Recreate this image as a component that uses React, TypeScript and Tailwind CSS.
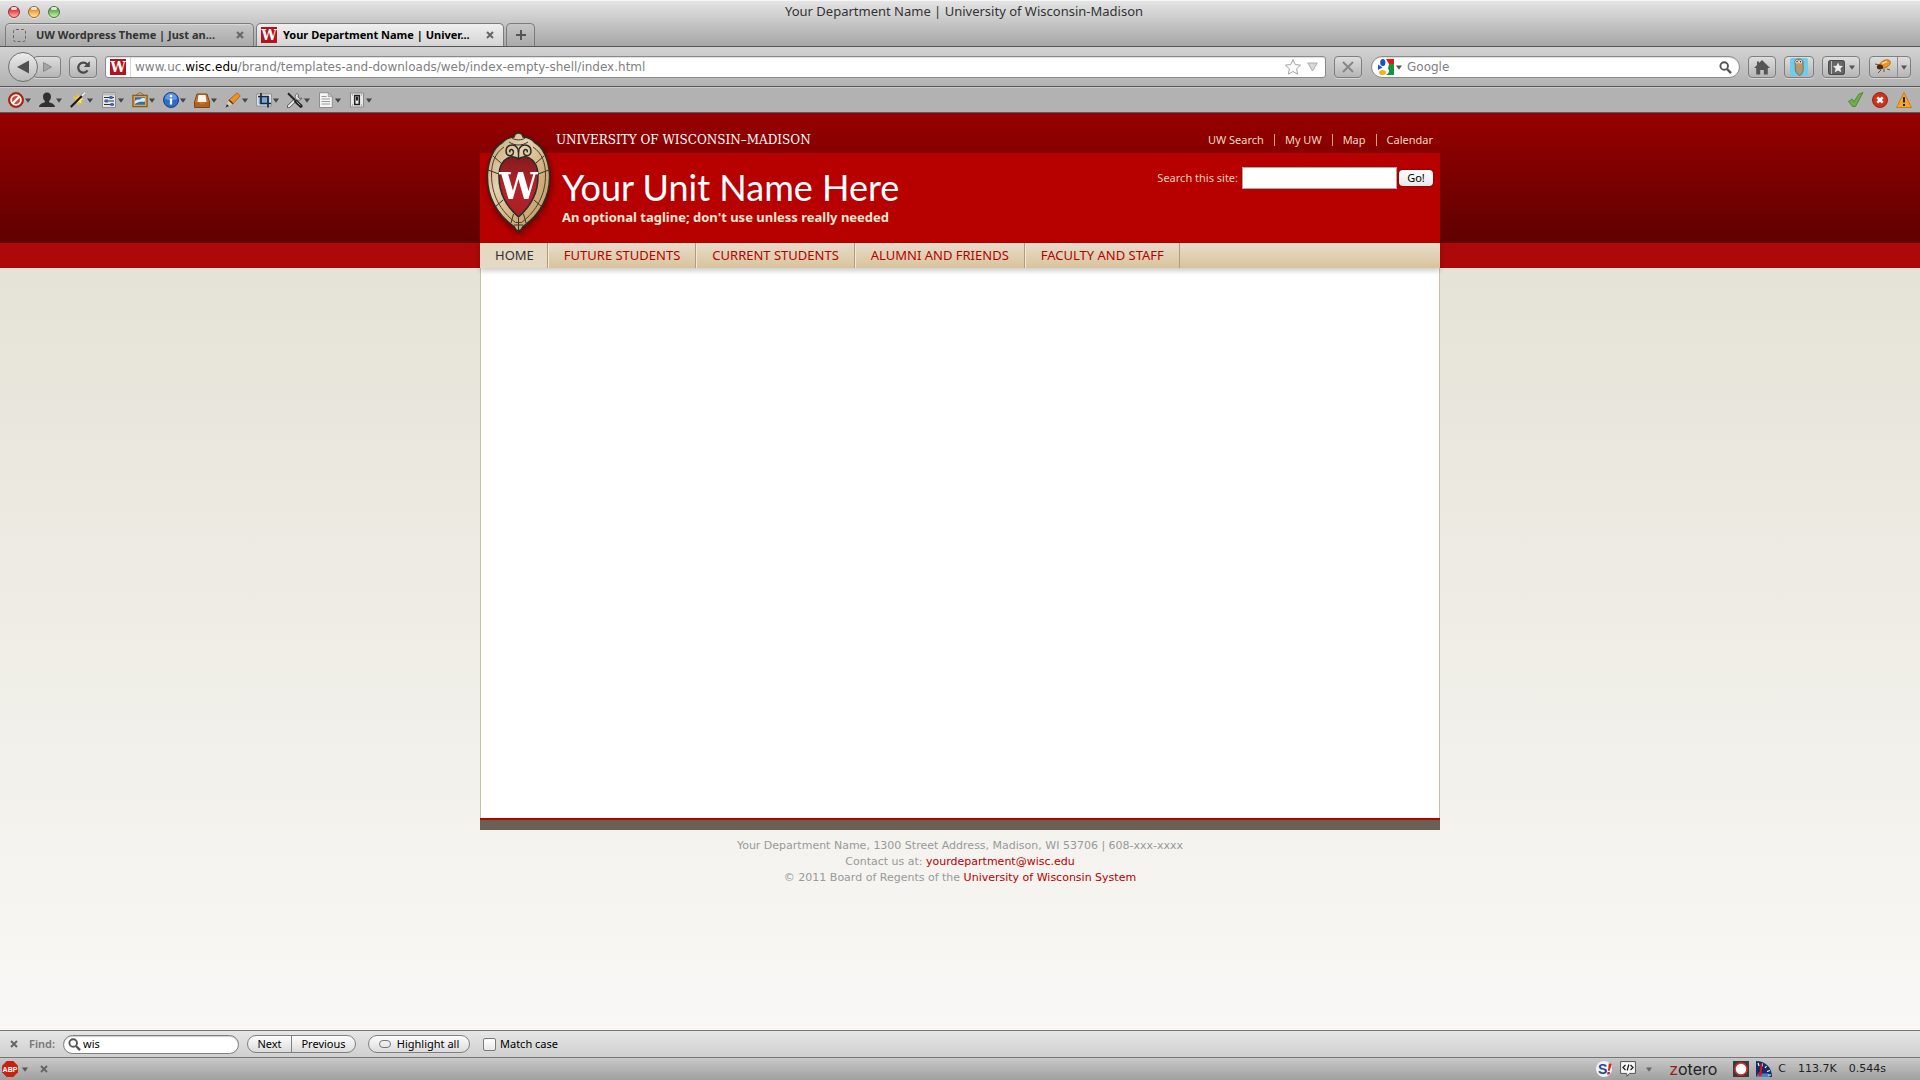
import React from "react";

const SANS = "font-['Lucida_Grande','Noto_Sans',sans-serif]";
const WIDE = "font-['Lucida_Grande','DejaVu_Sans',sans-serif]";

function Caret({ className = "text-[#444]" }: { className?: string }) {
  return (
    <svg width="6" height="5" viewBox="0 0 6 5" className={className} aria-hidden="true">
      <path d="M0 .5h6L3 4.8z" fill="currentColor" />
    </svg>
  );
}

function Cross({ className = "text-[#666]" }: { className?: string }) {
  return (
    <svg width="8" height="8" viewBox="0 0 8 8" className={className} aria-hidden="true">
      <path d="M1 1l6 6M7 1L1 7" stroke="currentColor" strokeWidth="2" />
    </svg>
  );
}

function Magnifier() {
  return (
    <svg width="13" height="13" viewBox="0 0 13 13" className="shrink-0" aria-hidden="true">
      <circle cx="5.2" cy="5" r="3.8" fill="none" stroke="#555" strokeWidth="1.9" />
      <path d="M8 8l4 4.2" stroke="#555" strokeWidth="2.4" />
    </svg>
  );
}

function SiteIcon() {
  return (
    <span className="flex size-4 shrink-0 items-center justify-center overflow-hidden bg-[#b5121b] font-['DejaVu_Serif_Condensed','DejaVu_Serif',serif] text-[15px] leading-none font-bold text-white">
      W
    </span>
  );
}

function TrafficLights() {
  const lights = [
    { name: "Close window", cls: "from-[#b5222a] via-[#ee5a5c] to-[#ffb0a8] border-[#8f3033]" },
    { name: "Minimize window", cls: "from-[#c8771c] via-[#f5ae4b] to-[#ffe79c] border-[#94662c]" },
    { name: "Zoom window", cls: "from-[#3f8a34] via-[#7cc266] to-[#cdf3a8] border-[#43733a]" },
  ];
  return (
    <div className="flex gap-2">
      {lights.map((l) => (
        <button
          key={l.name}
          aria-label={l.name}
          className={"relative size-3 rounded-full border bg-linear-to-b shadow-[0_1px_0_#fff8] " + l.cls}
        >
          <span className="absolute top-0 left-[2px] h-[3px] w-[6px] rounded-full bg-white/80" />
        </button>
      ))}
    </div>
  );
}

const toolIcons: { name: string; art: React.ReactNode }[] = [
  {
    name: "Disable",
    art: (
      <>
        <circle cx="8" cy="8" r="7.8" fill="#c4260f" />
        <circle cx="8" cy="8" r="7.2" fill="none" stroke="#8d1607" strokeWidth=".8" />
        <circle cx="8" cy="8" r="4.9" fill="#c6523f" stroke="#fff" strokeWidth="1.7" />
        <path d="M4.5 11.5l7-7" stroke="#fff" strokeWidth="1.9" />
      </>
    ),
  },
  {
    name: "Cookies",
    art: (
      <path
        d="M8 .5c2.6 0 4 1.8 4 4.2 0 1.700-.9 3.300-1.900 4.200v1.300c1.700.7 5.500 1.300 5.900 4.800H0c.4-3.500 4.200-4.100 5.900-4.800V8.900C4.900 8 4 6.400 4 4.700 4 2.300 5.400.5 8 .5z"
        fill="#303030"
      />
    ),
  },
  {
    name: "CSS",
    art: (
      <>
        <path d="M7 1l1.300 3L11 2.500 10.500 6l4 1-3.300 1.800 1.800 3-3.500-.8L8 14l-1.200-3.600L3 10.500 5.500 8 2.500 4.500l4 .8z" fill="#f3c63a" />
        <path d="M9 4l1 2.500 3 .5-2.500 1.200.5 2.800-2-1.600L6.500 10z" fill="#fff2a0" />
        <path d="M.8 15L14.600 1.200" stroke="#1d1d1d" strokeWidth="2.300" />
        <path d="M11.800 4L15 .9" stroke="#f3f3f3" strokeWidth="2" />
      </>
    ),
  },
  {
    name: "Forms",
    art: (
      <>
        <path d="M1.500 1h13v14.500h-13z" fill="#e7e7e7" stroke="#8b8b8b" />
        <path d="M1.500 1h13v2.500h-13z" fill="#bdbdbd" />
        <path d="M3 5.500h10M3 9h10M3 12.500h10" stroke="#333" />
        <path d="M8.500 4h3v3h-3zM4 7.500h3v3H4zM9.500 11h3v3h-3z" fill="#3b6bb8" />
      </>
    ),
  },
  {
    name: "Images",
    art: (
      <>
        <path d="M4 3l4-2.500L12 3" fill="none" stroke="#876024" strokeWidth=".8" />
        <path d="M.9 3.400h14.200v11.200H.9z" fill="#dca24c" stroke="#8f5b14" strokeWidth="1.300" />
        <path d="M3 5.300h10v7.400H3z" fill="#2d6fb7" />
        <path d="M3 9c3-3 4 0 6-2.500 1-.9 3-.6 4-.2v3.200C10 10 7 9 3 12z" fill="#d5e9f7" />
      </>
    ),
  },
  {
    name: "Information",
    art: (
      <>
        <circle cx="8" cy="8" r="7.500" fill="#2c6bcb" stroke="#1a4288" />
        <path d="M2 7a6 6 0 0112 0c-3 1.500-9 1.500-12 0z" fill="#7ba9ea" opacity=".7" />
        <circle cx="8" cy="4" r="1.300" fill="#fff" />
        <path d="M8 6.500v6" stroke="#fff" strokeWidth="2.300" />
      </>
    ),
  },
  {
    name: "Miscellaneous",
    art: (
      <>
        <path d="M3 2h10l2.500 8v5.500H.5V10z" fill="#c57532" stroke="#84450f" />
        <path d="M4.500 3h7l1 7h-9z" fill="#f8f4ee" />
        <path d="M1 10.300h4l1 1.900h4l1-1.900h4v4.700H1z" fill="#b4611f" />
      </>
    ),
  },
  {
    name: "Outline",
    art: (
      <>
        <path d="M12 .8l3.300 3-7.800 8.500-4-3.700z" fill="#f08f22" stroke="#ad5d0a" strokeWidth=".8" />
        <path d="M3.500 8.600l4 3.700L.8 15.300z" fill="#e3cfa8" />
        <path d="M2 12.300l2 1.700-3.500 1.600z" fill="#222" />
        <path d="M4.500 7.500l4 3.700-1 1.100-4-3.700z" fill="#444" />
      </>
    ),
  },
  {
    name: "Resize",
    art: (
      <>
        <path d="M.7 2h14.600v12H.7z" fill="#f5f5f5" stroke="#8a8a8a" />
        <path d="M2.500 4h11v8.500h-11z" fill="#78a9dc" />
        <path d="M5 1v10.500h10M2 4.500h10V15.500" fill="none" stroke="#1f2733" strokeWidth="1.700" />
      </>
    ),
  },
  {
    name: "Tools",
    art: (
      <>
        <path d="M1.500 14.500L10.500 6" stroke="#555" strokeWidth="3.500" strokeLinecap="round" />
        <path d="M1.800 14.200L10.500 6" stroke="#eee" strokeWidth="2" strokeLinecap="round" />
        <path d="M10 1.500a3.600 3.600 0 105 4.700l-2.500.3-1.500-1.500.5-2.300z" fill="#e4e4e4" stroke="#555" strokeWidth=".8" />
        <path d="M1 1.200l7 7" stroke="#222" strokeWidth="2" />
        <path d="M9 9.500l4.800 4.500" stroke="#222" strokeWidth="3.600" strokeLinecap="round" />
        <path d="M9.500 9.500l4 4" stroke="#aaa" strokeWidth="1" />
      </>
    ),
  },
  {
    name: "View Source",
    art: (
      <>
        <path d="M1.500.7h8.800l4 4v10.800H1.500z" fill="#f6f6f6" stroke="#8e8e8e" />
        <path d="M10.300.7v4h4z" fill="#ccc" stroke="#8e8e8e" strokeWidth=".7" />
        <path d="M3.500 4.500h5M3.500 7h8.500M3.500 9.500h8.500M3.500 12h8.500" stroke="#999" />
      </>
    ),
  },
  {
    name: "Options",
    art: (
      <>
        <path d="M1.500 1h13v14h-13z" fill="#e9e9e9" stroke="#8a8a8a" />
        <path d="M5.700 3.500h4.600v9H5.700z" fill="#eee" stroke="#222" strokeWidth="1.500" />
        <path d="M7 4.500h2v4H7z" fill="#222" />
        <path d="M3.500 2.500v1M12.500 2.500v1M3.500 12.500v1M12.500 12.500v1" stroke="#777" />
      </>
    ),
  },
];

const chromeButton =
  "flex h-[22px] items-center justify-center rounded-[4px] border border-[#7f7f7f] bg-linear-to-b from-[#dedede] to-[#b5b5b5] shadow-[0_1px_0_#ffffff66]";

function TabStrip() {
  return (
    <div className="flex h-[23px] items-stretch gap-[2px] pl-[5px]">
      <div className="flex w-[249px] items-center rounded-t-[5px] border border-b-0 border-[#7c7c7c] bg-linear-to-b from-[#c6c6c6] to-[#a9a9a9] px-[7px] shadow-[inset_0_1px_0_#ffffff55]">
        <span className="size-[13px] shrink-0 rounded-[3px] border border-dashed border-[#666]" />
        <span className="ml-[10px] min-w-0 flex-1 pt-px text-[11px] font-bold whitespace-nowrap text-[#333]">
          UW Wordpress Theme | Just an...
        </span>
        <button aria-label="Close tab" className="px-[2px]">
          <Cross />
        </button>
      </div>
      <div className="flex w-[248px] items-center rounded-t-[5px] border border-b-0 border-[#7c7c7c] bg-linear-to-b from-[#efefef] to-[#d4d4d4] px-[4px]">
        <SiteIcon />
        <span className="ml-[6px] min-w-0 flex-1 pt-px text-[11px] font-bold whitespace-nowrap text-black">
          Your Department Name | Univer...
        </span>
        <button aria-label="Close tab" className="px-[5px]">
          <Cross />
        </button>
      </div>
      <button
        aria-label="New tab"
        className="flex w-[29px] items-center justify-center rounded-t-[5px] border border-b-0 border-[#7c7c7c] bg-linear-to-b from-[#c6c6c6] to-[#a9a9a9]"
      >
        <svg width="10" height="10" viewBox="0 0 10 10" aria-hidden="true">
          <path d="M5 0v10M0 5h10" stroke="#555" strokeWidth="2" />
        </svg>
      </button>
    </div>
  );
}

function NavigationBar() {
  return (
    <div className="flex h-10 items-center border-b border-[#555] bg-linear-to-b from-[#d3d3d3] to-[#b1b1b1] pt-px pr-[9px] pl-2">
      <button
        aria-label="Back"
        className="relative z-10 flex size-[30px] shrink-0 items-center justify-center rounded-full border border-[#707070] bg-linear-to-b from-[#ececec] to-[#bababa]"
      >
        <svg width="13" height="14" viewBox="0 0 13 14" aria-hidden="true">
          <path d="M0 7L12 .5v13z" fill="#505050" />
        </svg>
      </button>
      <button aria-label="Forward" className={chromeButton + " -ml-[5px] w-[28px]"}>
        <svg width="9" height="10" viewBox="0 0 9 10" aria-hidden="true">
          <path d="M.5.5L8.500 5l-8 4.500z" fill="#a5a5a5" stroke="#7d7d7d" strokeWidth=".8" />
        </svg>
      </button>
      <button aria-label="Reload" className={chromeButton + " ml-2 w-[28px]"}>
        <svg width="15" height="15" viewBox="0 0 15 15" aria-hidden="true">
          <path d="M11.500 10.300A5 5 0 1111 4.300" fill="none" stroke="#4a4a4a" strokeWidth="2.200" />
          <path d="M13.800 1v6H7.800z" fill="#4a4a4a" />
        </svg>
      </button>
      <div className="ml-2 flex h-[22px] min-w-0 flex-1 items-center rounded-[3px] border border-[#8a8a8a] bg-white pl-[4px] shadow-[inset_0_1px_1px_#0002]">
        <SiteIcon />
        <span className="ml-[4px] h-full w-px bg-[#d5d5d5]" />
        <div className={"ml-[4px] flex-1 text-[12px] whitespace-nowrap text-[#808080] " + WIDE}>
          www.uc.<span className="text-black">wisc.edu</span>
          /brand/templates-and-downloads/web/index-empty-shell/index.html
        </div>
        <svg width="18" height="18" viewBox="0 0 18 18" className="mr-[5px]" aria-hidden="true">
          <path
            d="M9 1.500l2.200 5 5.400.6-4 3.700 1.100 5.400L9 13.500l-4.700 2.700 1.100-5.400-4-3.700 5.400-.6z"
            fill="#fafafa"
            stroke="#a5a5a5"
          />
        </svg>
        <svg width="11" height="10" viewBox="0 0 11 10" className="mr-[7px]" aria-hidden="true">
          <path d="M.8 1h9.400L5.500 9z" fill="#d8d8d8" stroke="#aaa" />
        </svg>
      </div>
      <button aria-label="Stop" className={chromeButton + " ml-2 w-[28px]"}>
        <svg width="12" height="12" viewBox="0 0 12 12" aria-hidden="true">
          <path d="M1 1l10 10M11 1L1 11" stroke="#888" strokeWidth="2" />
        </svg>
      </button>
      <div className="ml-[9px] flex h-[22px] w-[369px] items-center rounded-full border border-[#8a8a8a] bg-white pr-[7px] pl-[6px] shadow-[inset_0_1px_1px_#0002]">
        <svg width="16" height="16" viewBox="0 0 16 16" className="shrink-0" aria-hidden="true">
          <path d="M8 0h8v5h-5z" fill="#e8141c" />
          <path d="M11 5h5v11H8c3-2 4-4 2-6.500z" fill="#12953f" />
          <ellipse cx="4.800" cy="3.500" rx="2.600" ry="3.500" fill="#1556c4" />
          <path d="M0 5.500l4.500 3L0 11z" fill="#1556c4" />
          <ellipse cx="4.500" cy="13.400" rx="3.500" ry="2.500" fill="#f5b116" />
        </svg>
        <Caret className="ml-[2px] shrink-0 text-[#555]" />
        <input
          aria-label="Search Google"
          placeholder="Google"
          className={"ml-[5px] min-w-0 flex-1 bg-transparent text-[12px] outline-none placeholder:text-[#808080] " + WIDE}
        />
        <Magnifier />
      </div>
      <button aria-label="Home" className={chromeButton + " ml-2 w-[28px]"}>
        <svg width="16" height="15" viewBox="0 0 16 15" aria-hidden="true">
          <path d="M8 0l8 8h-2.200v6.500H9.800V10H6.200v4.500h-4V8H0l3-3V1.500h2V3z" fill="#555" />
        </svg>
      </button>
      <button aria-label="Bird add-on" className={chromeButton + " ml-2 w-[30px]"}>
        <svg width="18" height="18" viewBox="0 0 18 18" aria-hidden="true">
          <rect width="18" height="18" rx="2" fill="#6fcdec" />
          <path d="M5 3c1-3 7-2.500 8 .5.5 2-.3 4 .2 6.500.4 3-1 6.500-3.700 7.500C6.500 16 5 13 5.300 9.500 5.500 7 4.500 5 5 3z" fill="#b39873" stroke="#75603f" strokeWidth=".8" />
          <circle cx="7" cy="3.800" r="1.600" fill="#fff" />
          <circle cx="10.500" cy="3.800" r="1.600" fill="#fff" />
          <circle cx="7" cy="3.800" r=".8" fill="#111" />
          <circle cx="10.500" cy="3.800" r=".8" fill="#111" />
          <path d="M8 5.500h1.800L8.900 8z" fill="#f0a020" />
        </svg>
      </button>
      <button aria-label="Bookmarks" className={chromeButton + " ml-2 w-[38px] gap-[4px]"}>
        <svg width="17" height="15" viewBox="0 0 17 15" aria-hidden="true">
          <rect x=".6" y=".6" width="15.800" height="13.800" rx="1.500" fill="#666" stroke="#444" />
          <path d="M3.500 1v13" stroke="#bbb" />
          <path d="M10 2.500l1.500 3.300 3.500.3-2.600 2.400.8 3.700L10 10.400l-3.200 1.800.8-3.700L5 6.100l3.500-.3z" fill="#eee" />
        </svg>
        <Caret className="text-[#555]" />
      </button>
      <button aria-label="Debugger" className={chromeButton + " ml-[9px] w-[42px]"}>
        <svg width="18" height="16" viewBox="0 0 18 16" aria-hidden="true">
          <path d="M1 5l5 1M4 14l3-3M10 13v-3M13 10l3 1" stroke="#6b5234" />
          <ellipse cx="11" cy="5" rx="5.800" ry="3.600" transform="rotate(-28 11 5)" fill="#ea9526" stroke="#a85f10" strokeWidth=".7" />
          <ellipse cx="6" cy="8" rx="3.200" ry="2.500" fill="#4c2b0f" />
          <path d="M8 4.500l5-2" stroke="#ffe08a" strokeWidth="1.500" />
        </svg>
        <span className="mr-[3px] ml-[5px] h-full w-px bg-[#8c8c8c]" />
        <Caret className="text-[#555]" />
      </button>
    </div>
  );
}

function DeveloperBar() {
  return (
    <div className="flex h-[26px] items-center justify-between border-t border-b border-t-[#c9c9c9] border-b-[#5b5b5b] bg-[#b2b2b2] px-2">
      <div className="flex gap-2">
        {toolIcons.map((t) => (
          <button key={t.name} aria-label={t.name} className="flex items-center gap-px">
            <svg width="16" height="16" viewBox="0 0 16 16" aria-hidden="true">
              {t.art}
            </svg>
            <Caret />
          </button>
        ))}
      </div>
      <div className="flex items-center gap-2">
        <svg width="16" height="16" viewBox="0 0 16 16" aria-hidden="true">
          <path d="M.5 9.500L4 7l2 2.500L11 2l4-1.500L7.500 14.500h-3z" fill="#6fae42" stroke="#47802a" strokeWidth=".8" />
        </svg>
        <svg width="16" height="16" viewBox="0 0 16 16" aria-hidden="true">
          <circle cx="8" cy="8" r="7.500" fill="#d0301c" stroke="#8f1d0e" strokeWidth=".9" />
          <path d="M5.300 5.300l5.400 5.400M10.700 5.300l-5.400 5.400" stroke="#fff" strokeWidth="2.600" />
        </svg>
        <svg width="16" height="16" viewBox="0 0 16 16" aria-hidden="true">
          <path d="M8 .5l7.500 15H.5z" fill="#f6a62a" stroke="#c77811" strokeWidth=".9" strokeLinejoin="round" />
          <path d="M8 5v5.500M8 12v2" stroke="#1b1b1b" strokeWidth="1.900" />
        </svg>
      </div>
    </div>
  );
}

function Crest() {
  return (
    <svg
      width="66"
      height="101"
      viewBox="0 0 66 101"
      className="absolute top-[19px] left-[6px] drop-shadow-[1px_3px_3px_rgba(0,0,0,0.45)]"
      role="img"
      aria-label="University crest"
    >
      <defs>
        <linearGradient id="stone" x1="0" y1="0" x2="1" y2="1">
          <stop offset="0" stopColor="#bf9b68" />
          <stop offset=".35" stopColor="#e6d2b0" />
          <stop offset=".65" stopColor="#cfae7c" />
          <stop offset="1" stopColor="#c09a64" />
        </linearGradient>
        <linearGradient id="field" x1="0" y1="0" x2="0" y2="1">
          <stop offset="0" stopColor="#841a1d" />
          <stop offset=".5" stopColor="#b5232b" />
          <stop offset="1" stopColor="#a81e25" />
        </linearGradient>
      </defs>
      <path
        d="M32.500 1c3 0 4.200 2 4.600 4 5.500.2 9 2.500 11.500 5.500C57 15 62.500 27 63.500 42 64.500 64 54 83 37 94.500c-1 3-2.500 4-4.500 4.500-2-.5-3.500-1.500-4.500-4.500C11 83 .5 64 1.500 42 2.500 27 8 15 16.400 10.500 19 7.500 22.500 5.200 27.900 5c.4-2 1.600-4 4.600-4z"
        fill="url(#stone)"
        stroke="#2c2a26"
        strokeWidth="1.500"
      />
      <path
        d="M18 15C9 21 5.500 31 5.500 43c0 20 9 36 24 47.500h6C50.500 79 59.500 63 59.500 43 59.500 31 56 21 47 15"
        fill="none"
        stroke="#4a3e2e"
        strokeWidth="1"
      />
      <g fill="none" stroke="#3a3228" strokeWidth="1">
        <path d="M2 38l11 4M63 38l-11 4M9 75l8-7M56 75l-8-7M25 91l2.500-9M40 91l-2.500-9M7 24l8 7M58 24l-8 7M28 93h9M32.500 86v12" />
        <path d="M26 6c3 2.500 10 2.500 13 0M23 10c6 4 13 4 19 0" />
      </g>
      <path
        d="M32.500 27c-4-4.500-19-3-19.500 16-.5 17 7 31 19.500 42C45 74 52.500 60 52 43c-.5-19-15.500-20.500-19.500-16z"
        fill="url(#field)"
        stroke="#2c2a26"
        strokeWidth="1.500"
      />
      <g fill="none" stroke="#2c2a26" strokeWidth="1.500" strokeLinecap="round">
        <path d="M32.500 20c-.5-6-5-8-9-6.500-4.500 2-4.500 9-.5 10 3.500.8 5.500-2.500 4-5-1.500-2-4-.5-3.200 1.300" />
        <path d="M32.500 20c.5-6 5-8 9-6.500 4.500 2 4.500 9 .5 10-3.500.8-5.500-2.500-4-5 1.500-2 4-.5 3.200 1.300" />
        <path d="M32.500 20v6" />
      </g>
      <text
        x="32.500"
        y="67"
        textAnchor="middle"
        className="fill-white font-['DejaVu_Serif_Condensed','DejaVu_Serif',serif] text-[38px] font-bold"
      >
        W
      </text>
    </svg>
  );
}

function SiteHeader() {
  const utility = ["UW Search", "My UW", "Map", "Calendar"];
  const sections = ["FUTURE STUDENTS", "CURRENT STUDENTS", "ALUMNI AND FRIENDS", "FACULTY AND STAFF"];
  return (
    <header>
      <div className="bg-linear-to-b from-[#980000] to-[#600000]">
        <div className="relative mx-auto max-w-[960px]">
          <Crest />
          <div className="flex h-10 items-center justify-between pt-[14px] pr-[7px] pl-[76px]">
            <a
              href="#uw"
              className="font-['DejaVu_Serif',serif] text-[12px] leading-4 whitespace-nowrap text-white"
            >
              UNIVERSITY OF WISCONSIN–MADISON
            </a>
            <ul className="flex items-center text-[11px] leading-[12px] text-[#efd9c0]">
              {utility.map((label, i) => (
                <li key={label} className={i > 0 ? "ml-[10px] border-l border-[#d9a07a] pl-[10px]" : ""}>
                  <a href="#utility">{label}</a>
                </li>
              ))}
            </ul>
          </div>
          <div className="flex h-[90px] justify-between bg-[#b70000] pr-[7px] pl-[82px]">
            <div className="pt-3">
              <h1 className="font-[Lato,sans-serif] text-[36px] leading-[44px] whitespace-nowrap text-white">
                Your Unit Name Here
              </h1>
              <p className="text-[13px] leading-4 font-bold whitespace-nowrap text-[#f8e6d2]">
                An optional tagline; don't use unless really needed
              </p>
            </div>
            <form className="mt-[14px] flex h-[22px] items-center self-start" onSubmit={(e) => e.preventDefault()}>
              <label htmlFor="site-search" className="mr-[4px] text-[11px] text-[#efd0b8]">
                Search this site:
              </label>
              <input
                id="site-search"
                className="h-[22px] w-[155px] border border-[#a9a9a9] bg-white px-1 text-[12px] text-black outline-none"
              />
              <button className="ml-[2px] h-4 w-[34px] rounded-[4px] bg-linear-to-b from-white to-[#e8e8e8] text-[11px] leading-4 text-black shadow-[0_0_2px_#400]">
                Go!
              </button>
            </form>
          </div>
        </div>
      </div>
      <div className="bg-[#ad080a]">
        <nav className="relative mx-auto flex h-[25px] max-w-[960px] bg-linear-to-b from-[#e8dccb] to-[#d8c39c] text-[13px] leading-[25px] shadow-[0_3px_5px_rgba(0,0,0,0.2)]">
          <a href="#home" className="border-r border-[#b19b7c] bg-[#e6d9c4] pr-[13px] pl-[15px] text-[#333]">
            HOME
          </a>
          {sections.map((label) => (
            <a
              key={label}
              href="#section"
              className="border-r border-l border-r-[#b19b7c] border-l-[#f1e8da] px-[15px] whitespace-nowrap text-[#b70000]"
            >
              {label}
            </a>
          ))}
        </nav>
      </div>
    </header>
  );
}

function SiteFooter() {
  return (
    <footer className="mx-auto max-w-[960px]">
      <div className="h-[2px] bg-[#b70000]" />
      <div className="h-[10px] bg-[#686052]" />
      <div className={"pt-2 text-center text-[11px] leading-4 text-[#999] " + WIDE}>
        <p>Your Department Name, 1300 Street Address, Madison, WI 53706 | 608-xxx-xxxx</p>
        <p>
          Contact us at:{" "}
          <a href="#contact" className="text-[#b70000]">
            yourdepartment@wisc.edu
          </a>
        </p>
        <p>
          © 2011 Board of Regents of the{" "}
          <a href="#system" className="text-[#b70000]">
            University of Wisconsin System
          </a>
        </p>
      </div>
    </footer>
  );
}

function FindBar() {
  const pill = "h-[18px] border border-[#808080] bg-linear-to-b from-[#fdfdfd] to-[#dcdcdc] text-[11px] leading-4";
  return (
    <div className="flex h-[28px] items-center border-t border-b border-t-[#777] border-b-[#777] bg-linear-to-b from-[#e6e6e6] to-[#d0d0d0] pl-[10px] text-[11px] text-black">
      <button aria-label="Close find bar">
        <Cross />
      </button>
      <label htmlFor="find" className="ml-[11px] w-[34px] font-semibold text-[#777]">
        Find:
      </label>
      <div className="flex h-[19px] w-[176px] items-center rounded-full border border-[#7f7f7f] bg-white pl-[4px] shadow-[inset_0_1px_1px_#0003]">
        <Magnifier />
        <input id="find" defaultValue="wis" className="ml-[2px] min-w-0 flex-1 bg-transparent text-[11px] outline-none" />
      </div>
      <button className={pill + " ml-2 w-[45px] rounded-l-full"}>Next</button>
      <button className={pill + " -ml-px w-[65px] rounded-r-full"}>Previous</button>
      <button className={pill + " ml-3 flex w-[102px] items-center justify-center gap-[6px] rounded-full"}>
        <span className="h-2 w-3 rounded-full border border-[#777]" />
        Highlight all
      </button>
      <label className="ml-[13px] flex items-center gap-[4px]">
        <input
          type="checkbox"
          className="size-[13px] appearance-none rounded-[2px] border border-[#7b7b7b] bg-linear-to-b from-white to-[#e9e9e9]"
        />
        Match case
      </label>
    </div>
  );
}

function StatusBar() {
  return (
    <div className="flex h-[22px] items-center justify-between bg-linear-to-b from-[#c9c9c9] to-[#a0a0a0] pr-[34px] pl-[2px] text-[11px] text-[#222]">
      <div className="flex items-center">
        <button aria-label="Adblock Plus" className="flex items-center">
          <svg width="16" height="16" viewBox="0 0 16 16" aria-hidden="true">
            <path d="M4.700 0h6.600L16 4.700v6.600L11.300 16H4.700L0 11.300V4.700z" fill="#c9200f" />
            <text x="8" y="11" textAnchor="middle" className="fill-white font-['Liberation_Sans_Narrow','Liberation_Sans',sans-serif] text-[7px] font-bold">
              ABP
            </text>
          </svg>
          <Caret className="ml-1 text-[#555]" />
        </button>
        <button aria-label="Close add-on bar" className="ml-3">
          <Cross />
        </button>
      </div>
      <div className={"flex items-center " + WIDE}>
        <svg width="16" height="16" viewBox="0 0 16 16" aria-hidden="true">
          <circle cx="8" cy="8" r="8" fill="#f3f3f3" />
          <text x="2" y="13" className="fill-[#1c4a9c] font-['Liberation_Sans',sans-serif] text-[14px] font-bold">
            S
          </text>
          <path d="M12.800 2.500l2.800.3-1.800 7h-1.800zM11.500 11h2.500l-.4 2.500h-2.500z" fill="#e21b1b" />
        </svg>
        <svg width="16" height="16" viewBox="0 0 16 16" className="ml-2" aria-hidden="true">
          <path d="M.6.6h14.800v11.800H9.500L7 15.400l-.3-3H.6z" fill="#f8f8f8" stroke="#555" />
          <path d="M5.500 4L3 6.500 5.500 9M10.500 4L13 6.500 10.500 9M8.800 3.500L7.200 9.500" fill="none" stroke="#222" strokeWidth="1.300" />
        </svg>
        <Caret className="ml-[10px] text-[#666]" />
        <span className="ml-[17px] w-[49px] font-[Inter,sans-serif] text-[16px] leading-none text-[#222]">
          <span className="text-[#a01c1c]">z</span>otero
        </span>
        <svg width="16" height="16" viewBox="0 0 16 16" className="ml-[15px]" aria-hidden="true">
          <path d="M0 0h16v16H0z" fill="#3b3b3b" />
          <circle cx="8" cy="8" r="6" fill="#fff" stroke="#e02a2a" strokeWidth="1.500" />
        </svg>
        <svg width="16" height="16" viewBox="0 0 16 16" className="ml-[7px]" aria-hidden="true">
          <path d="M0 0c9 0 16 6 16 16H0z" fill="#172b66" />
          <path d="M2 12.500h10L14 16H0z" fill="#3d86d8" />
          <path d="M2 2l1 3M6.500 2.500l-.5 3M10.500 5L9 7M14 9.500l-3 1M15 14h-3" stroke="#fff" strokeWidth="1.200" />
          <path d="M4.500 14L5.500 3" stroke="#e01414" strokeWidth="1.800" />
          <circle cx="4" cy="13" r="2" fill="#e01414" />
        </svg>
        <span className="ml-[6px]">C</span>
        <span className="ml-3">113.7K</span>
        <span className="ml-3">0.544s</span>
      </div>
    </div>
  );
}

export default function App() {
  return (
    <div className={"flex min-h-screen flex-col " + SANS}>
      <div className="border-b border-[#555] bg-linear-to-b from-[#e6e6e6] to-[#a6a6a6] shadow-[inset_0_1px_0_#f6f6f6]">
        <div className="grid h-[23px] grid-cols-[1fr_auto_1fr] items-center pl-2">
          <TrafficLights />
          <div className="self-start text-[13px] leading-[22px] text-[#333]">
            Your Department Name | University of Wisconsin-Madison
          </div>
        </div>
        <TabStrip />
      </div>
      <NavigationBar />
      <DeveloperBar />
      <div className="flex flex-1 flex-col">
        <SiteHeader />
        <div className="flex-1 bg-linear-to-b from-[#e5e3d7] to-[#f9f8f6]">
          <main className="mx-auto min-h-[550px] max-w-[960px] border-x border-[#c9bfa5] bg-white" />
          <SiteFooter />
        </div>
      </div>
      <FindBar />
      <StatusBar />
    </div>
  );
}
